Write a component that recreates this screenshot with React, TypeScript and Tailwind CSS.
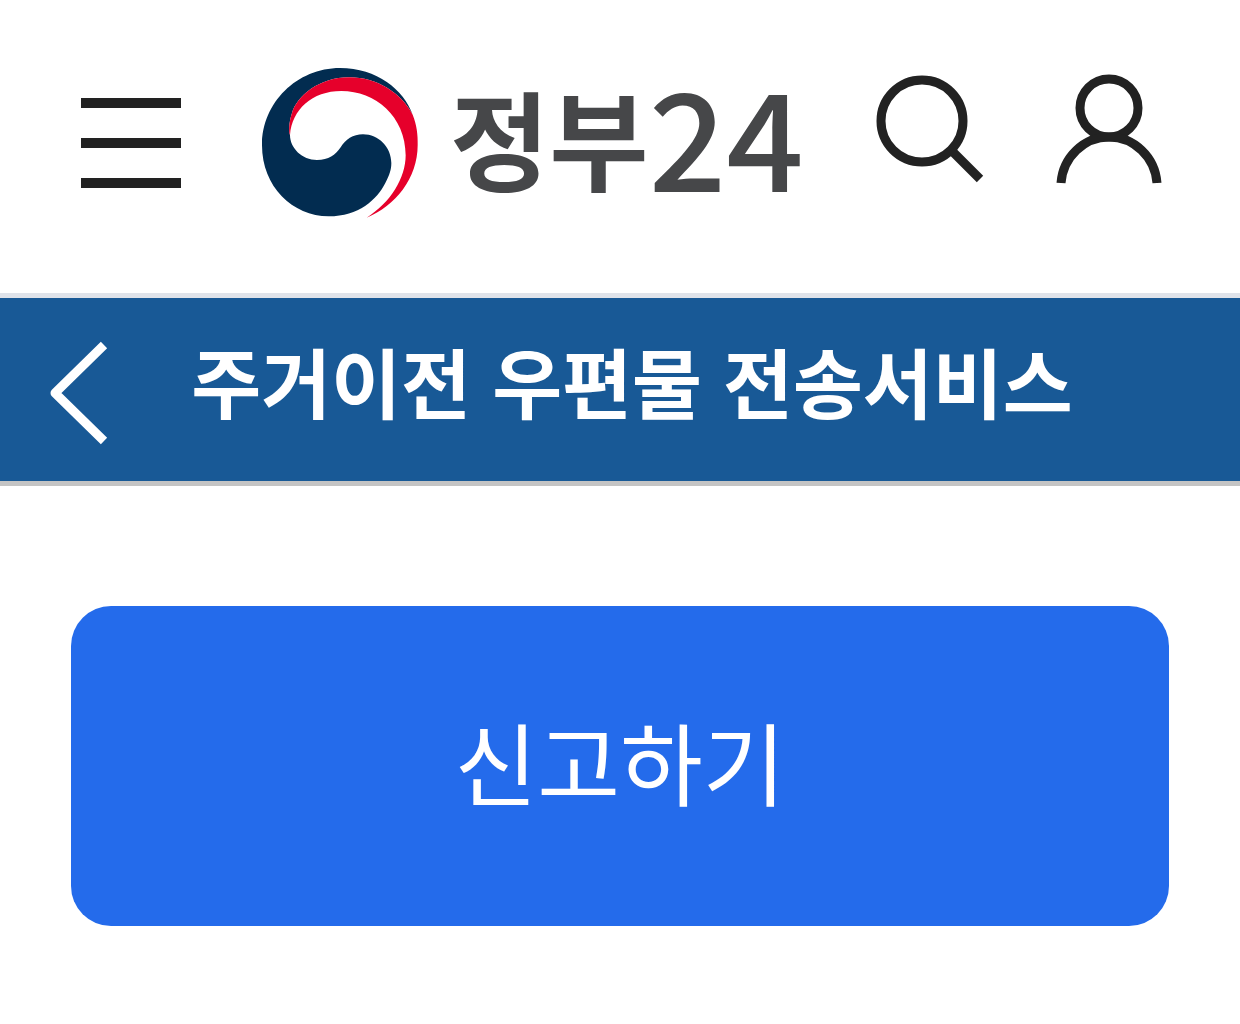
import React from "react";

const MenuIcon: React.FC = () => (
  <svg width="102" height="150" viewBox="0 0 102 150" fill="#222" aria-hidden="true">
    <path d="M1 30h100v10H1zM1 70h100v10H1zM1 110h100v10H1z" />
  </svg>
);

const Emblem: React.FC = () => (
  <svg width="156" height="150" viewBox="0 0 468 450" aria-hidden="true">
    <path
      fill="#022c50"
      d="M452 140C425 65 345 0 234 0C105 0 0 104 0 232C0 356 92 445 200 445C290 445 345 395 370 345C383 320 388 305 388 285C388 238 350 199 303 199C273 199 250 215 236 238C220 262 200 276 165 276C120 276 84 240 84 201C80 190 80 165 90 135C105 85 170 28 262 28C345 28 418 75 452 140Z"
    />
    <path
      fill="#e6002b"
      d="M84 201C80 190 80 165 90 135C105 85 170 28 262 28C345 28 418 75 452 140C464 170 468 200 467 232C467 330 400 415 314 449C385 405 431 330 431 262C431 145 340 69 238 69C150 69 90 125 84 201Z"
    />
  </svg>
);

const SearchIcon: React.FC = () => (
  <svg width="108" height="150" viewBox="0 0 108 150" fill="none" stroke="#222" strokeWidth="9" aria-hidden="true">
    <circle cx="46" cy="53" r="41" />
    <path d="M76 83l28 28" />
  </svg>
);

const UserIcon: React.FC = () => (
  <svg width="108" height="150" viewBox="0 0 108 150" fill="none" stroke="#222" strokeWidth="9" aria-hidden="true">
    <circle cx="54" cy="40" r="29" />
    <path d="M6 115C8 89 29 69 54 69S100 89 102 115" />
  </svg>
);

const BackIcon: React.FC = () => (
  <svg width="60" height="104" viewBox="0 0 60 104" fill="none" stroke="#fff" strokeWidth="9" aria-hidden="true">
    <path d="M56 4L7 52l49 48" strokeLinejoin="round" />
  </svg>
);

const App: React.FC = () => {
  return (
    <div className="min-h-screen bg-white font-['Noto_Sans_CJK_KR',sans-serif]">
      {/* Header */}
      <header className="flex items-start border-b-5 border-[#dfe3ea] pt-[68px] pr-[77px] pb-[75px] pl-20">
        <button type="button" aria-label="전체메뉴">
          <MenuIcon />
        </button>
        <a href="#" className="ml-20 flex h-[150px] items-start gap-8 text-[#464749]">
          <Emblem />
          <span className="flex items-start whitespace-nowrap">
            <span className="text-[108px] leading-[136px] font-bold">정부</span>
            <span className="text-[136px] leading-[130px] font-medium">24</span>
          </span>
        </a>
        <div className="ml-auto flex gap-[71px]">
          <button type="button" aria-label="검색">
            <SearchIcon />
          </button>
          <button type="button" aria-label="로그인">
            <UserIcon />
          </button>
        </div>
      </header>

      {/* Page title */}
      <div className="flex items-start border-b-5 border-[#c4c4c4] bg-[#185996] px-12 pt-[43px] pb-9 text-white">
        <button type="button" aria-label="이전">
          <BackIcon />
        </button>
        <h1 className="flex-1 pr-9 text-center font-['Liberation_Sans','Noto_Sans_CJK_KR',sans-serif] text-[76px] leading-[92px] font-bold">
          주거이전 우편물 전송서비스
        </h1>
      </div>

      <main className="px-[71px] py-[120px]">
        <button type="button" className="h-80 w-full rounded-[40px] bg-[#246beb] pb-3 text-[90px] text-white">
          신고하기
        </button>
      </main>
    </div>
  );
};

export default App;
